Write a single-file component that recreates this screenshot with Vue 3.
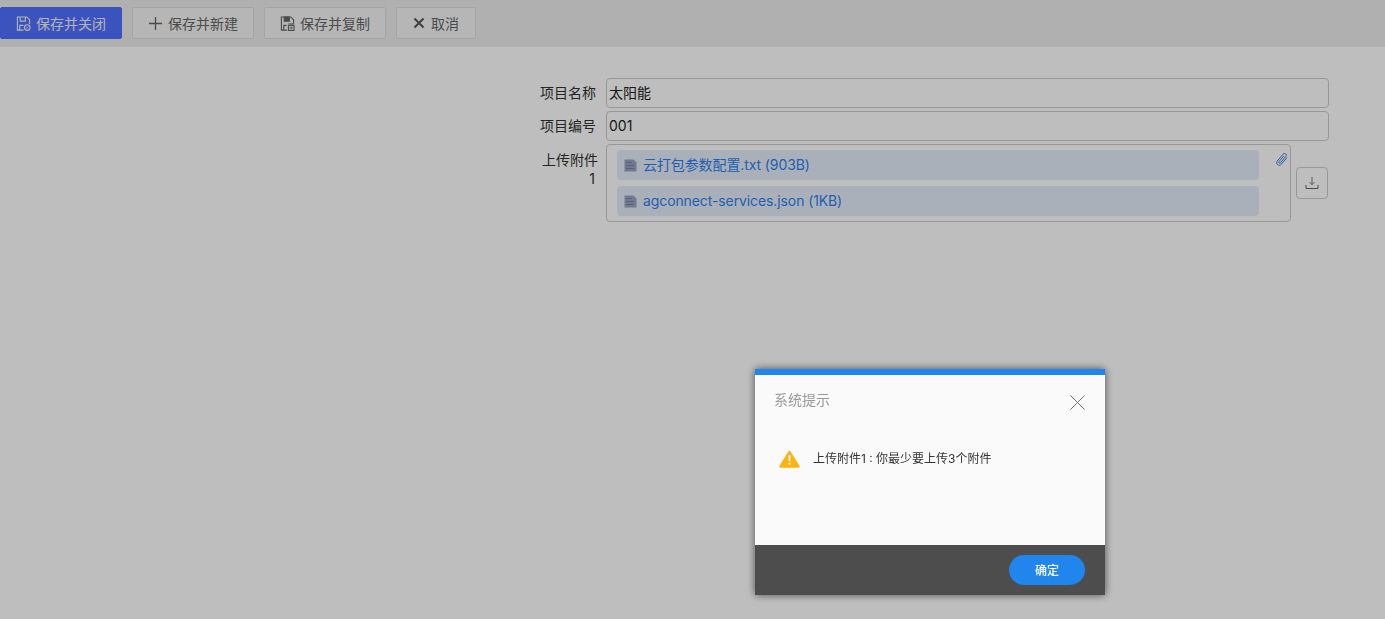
<template>
  <div class="page">
    <!-- Toolbar -->
    <div class="toolbar">
      <button class="tool-btn primary">
        <svg class="tool-icon" viewBox="0 0 16 16" fill="none" stroke="currentColor" stroke-width="1.2">
          <path d="M8 15H1.500V1h10l3 3v4.500" />
          <path d="M4.500 1v4.500h5.500V1M4 15v-5h4" />
          <circle cx="12" cy="12.300" r="3" />
          <path d="M10.800 11.100l2.400 2.400M13.200 11.100l-2.400 2.400" stroke-width="0.8" />
        </svg>
        保存并关闭
      </button>
      <button class="tool-btn">
        <svg class="tool-icon" viewBox="0 0 16 16" fill="none" stroke="currentColor" stroke-width="1.4">
          <path d="M1 8h14M8 1v14" />
        </svg>
        保存并新建
      </button>
      <button class="tool-btn">
        <svg class="tool-icon" viewBox="0 0 16 16" fill="none" stroke="currentColor" stroke-width="1.2">
          <path d="M7.500 15H1.500V1h10l3 3v4" />
          <path d="M4.500 1v4.500h5.500V1z" fill="currentColor" />
          <path d="M4 15v-5h3" />
          <rect x="9" y="10" width="6" height="5.400" />
          <path d="M9 8.500h6" />
          <path d="M12 11v3.500M10 12.700h4" stroke-width="0.8" />
        </svg>
        保存并复制
      </button>
      <button class="tool-btn">
        <svg class="tool-icon cancel" viewBox="0 0 12 12" fill="none" stroke="currentColor" stroke-width="2">
          <path d="M1.500 1.500l9 9M10.500 1.500l-9 9" />
        </svg>
        取消
      </button>
    </div>

    <!-- Form -->
    <div class="form">
      <label class="label">项目名称</label>
      <div class="input">太阳能</div>

      <label class="label">项目编号</label>
      <div class="input">001</div>

      <label class="label upload-label">上传附件<span class="label-tail">1</span></label>
      <div class="upload-row">
        <div class="upload-box">
          <div class="files">
            <a v-for="file in files" :key="file" class="file">
              <svg class="file-icon" viewBox="0 0 13 13">
                <path d="M0.500 0.500h9l3 3v9h-12z" fill="#98a4bf" />
                <path d="M2.500 3.500h5M2.500 6.500h8M2.500 9.500h8" stroke="#4f6496" stroke-width="1" stroke-dasharray="1 1" />
              </svg>
              {{ file }}
            </a>
          </div>
          <svg class="clip" viewBox="0 0 14 14" fill="none" stroke="#3f7fe0" stroke-width="1">
            <path d="M12 5.500L6.400 12.200c-1 1.200-2.700 1.400-3.800.5-1.100-.9-1.200-2.600-.2-3.800L8 2.200c.7-.8 1.900-1 2.700-.3.8.7.8 1.800.1 2.600L5.500 10.800c-.4.5-1 .5-1.400.2-.4-.3-.4-.9-.1-1.400L9 3.800" />
          </svg>
        </div>
        <button class="download">
          <svg viewBox="0 0 14 14" width="14" height="14" fill="none" stroke-width="1">
            <path d="M7 1v7.500M4.500 6.200L7 8.700l2.500-2.500" stroke="#777" />
            <path d="M1 9v3.500h12V9" stroke="#666" />
          </svg>
        </button>
      </div>
    </div>

    <!-- Mask and dialog -->
    <div class="mask"></div>
    <div class="dialog">
      <div class="dialog-head">
        <span>系统提示</span>
        <svg class="close" viewBox="0 0 16 16" fill="none" stroke="#555" stroke-width="0.9">
          <path d="M0.500 0.500l15 15M15.500 0.500l-15 15" />
        </svg>
      </div>
      <div class="dialog-body">
        <svg class="warn" viewBox="0 0 22 19">
          <path d="M11 2L20.500 17.500H1.500z" fill="#ffb30f" stroke="#ffb30f" stroke-width="2.500" stroke-linejoin="round" />
          <path d="M9.800 5.500h2.400l-.4 6.500h-1.600zM9.900 13.500h2.200v2.200H9.900z" fill="#fff" />
        </svg>
        <span>上传附件1 : 你最少要上传3个附件</span>
      </div>
      <div class="dialog-foot">
        <button class="ok">确定</button>
      </div>
    </div>
  </div>
</template>

<script setup>
const files = ["云打包参数配置.txt (903B)", "agconnect-services.json (1KB)"];
</script>

<style>
html,
body {
  margin: 0;
  height: 100%;
  overflow: hidden;
}
</style>

<style scoped>
.page {
  height: 619px;
  background: #fff;
  font-family: Inter, "Noto Sans CJK SC", sans-serif;
  font-size: 14px;
  color: #333;
}

.toolbar {
  display: flex;
  gap: 10px;
  height: 47px;
  padding-top: 7px;
  box-sizing: border-box;
  background: #ececec;
}

.tool-btn {
  display: flex;
  align-items: center;
  justify-content: center;
  gap: 5px;
  height: 32px;
  width: 122px;
  padding: 0;
  border: 1px solid #dcdcdc;
  border-radius: 2px;
  background: #f5f5f5;
  color: #666;
  font: inherit;
  font-size: 14px;
}

.tool-btn:last-child {
  width: 80px;
}

.tool-btn.primary {
  border-color: #5070ff;
  background: #5070ff;
  color: #f2f2f2;
}

.tool-icon {
  width: 15px;
  height: 15px;
}

.tool-icon.cancel {
  width: 12px;
  height: 12px;
  margin-right: 1px;
  color: #555;
}

.form {
  display: grid;
  grid-template-columns: 598px 1fr;
  column-gap: 8px;
  row-gap: 3px;
  padding: 31px 56px 0 0;
}

.label {
  justify-self: end;
  width: 58px;
  padding-right: 2px;
  box-sizing: border-box;
  text-align: right;
  line-height: 30px;
  color: #333;
}

.upload-label {
  padding-right: 0;
  padding-top: 6px;
  line-height: 19px;
}

.label-tail {
  display: block;
  padding-right: 3px;
}

.input {
  height: 30px;
  padding-left: 2px;
  box-sizing: border-box;
  border: 1px solid #ccc;
  border-radius: 4px;
  line-height: 28px;
  font-size: 14px;
  color: #222;
}

.upload-row {
  display: flex;
  align-items: center;
  gap: 5px;
}

.upload-box {
  position: relative;
  flex: 1;
  height: 78px;
  box-sizing: border-box;
  padding: 5px 31px 0 10px;
  border: 1px solid #ccc;
  border-radius: 4px;
}

.files {
  display: flex;
  flex-direction: column;
  gap: 6px;
}

.file {
  display: flex;
  align-items: center;
  height: 30px;
  padding-left: 7px;
  border-radius: 4px;
  background: #e4edf9;
  color: #2f80ed;
  line-height: 28px;
  letter-spacing: -0.1px;
}

.file-icon {
  width: 13px;
  height: 13px;
  margin-right: 6px;
}

.clip {
  position: absolute;
  top: 7px;
  right: 1px;
  width: 14px;
  height: 14px;
}

.download {
  display: flex;
  align-items: center;
  justify-content: center;
  width: 32px;
  height: 32px;
  padding: 0;
  margin-right: 1px;
  border: 1px solid #ccc;
  border-radius: 4px;
  background: #fff;
}

.mask {
  position: fixed;
  inset: 0;
  background: rgba(0, 0, 0, 0.255);
}

.dialog {
  position: fixed;
  left: 755px;
  top: 369px;
  display: flex;
  flex-direction: column;
  width: 350px;
  height: 226px;
  box-sizing: border-box;
  border-top: 6px solid #2185ee;
  background: #fafafa;
  box-shadow: 0 0 8px rgba(0, 0, 0, 0.6);
}

.dialog-head {
  display: flex;
  justify-content: space-between;
  padding: 15px 20px 0 19px;
  font-size: 14px;
  line-height: 19px;
  color: #999;
}

.close {
  width: 15px;
  height: 15px;
  margin-top: 5px;
}

.dialog-body {
  display: flex;
  flex: 1;
  align-items: flex-start;
  gap: 13px;
  padding: 39px 24px 0;
  font-size: 12px;
  line-height: 19px;
  color: #333;
}

.warn {
  width: 21px;
  height: 18px;
  margin-top: 1px;
}

.dialog-foot {
  display: flex;
  justify-content: flex-end;
  align-items: center;
  height: 50px;
  padding-right: 20px;
  background: #4d4d4d;
}

.ok {
  width: 76px;
  height: 30px;
  padding: 0 0 2px;
  border: none;
  border-radius: 15px;
  background: #2185ee;
  color: #fff;
  font: inherit;
  font-size: 12px;
  font-weight: 500;
}
</style>
